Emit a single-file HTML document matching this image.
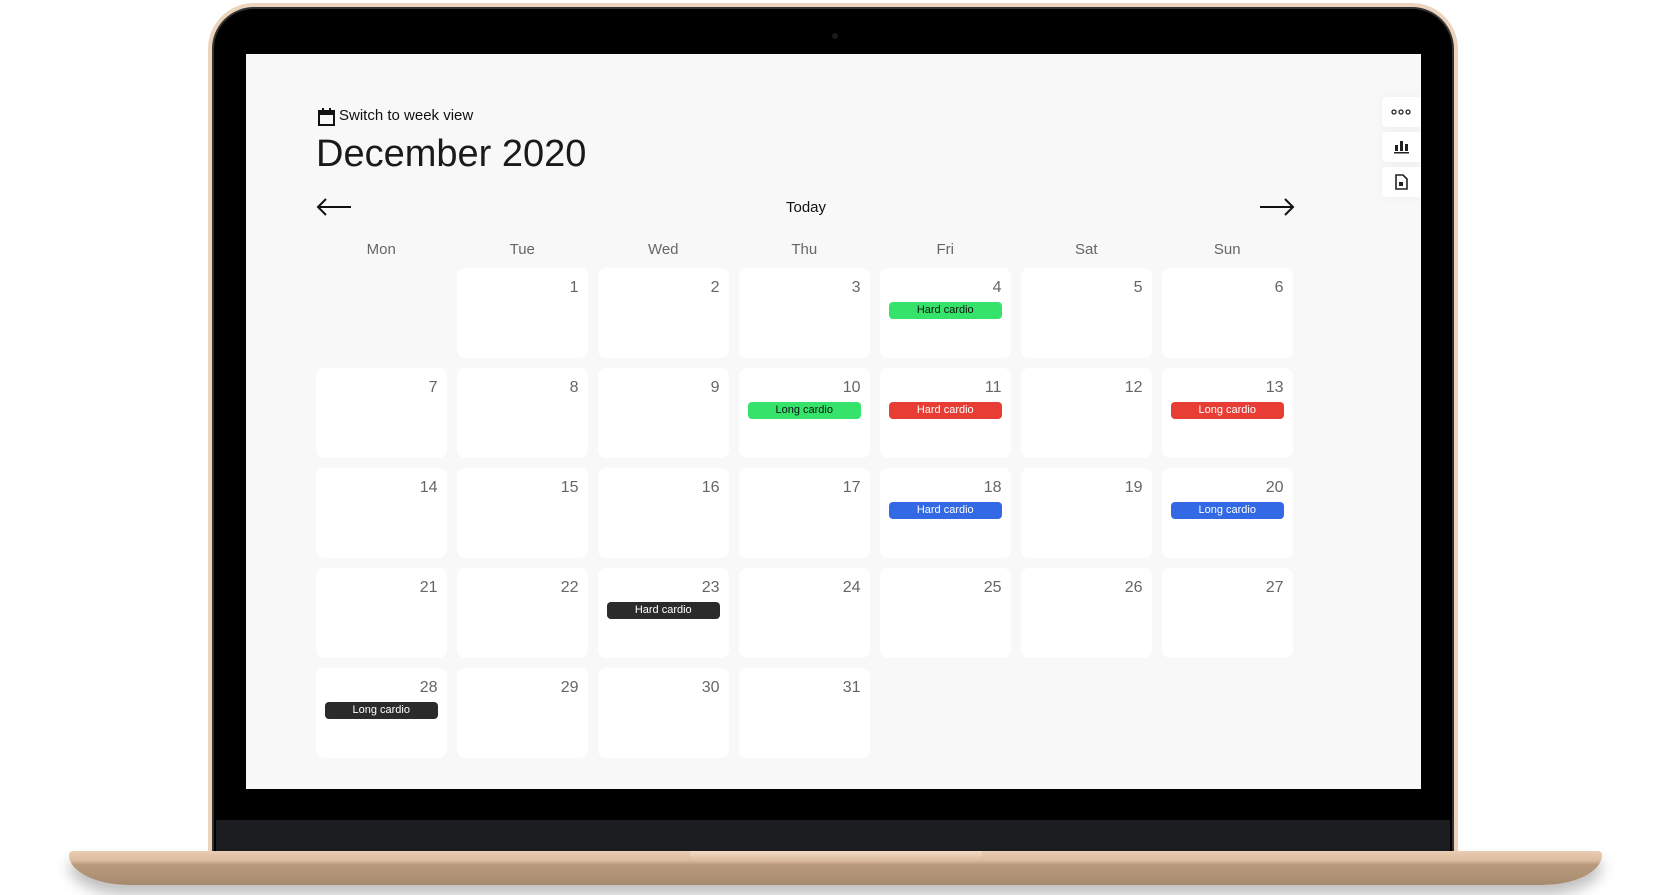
<!DOCTYPE html>
<html><head><meta charset="utf-8"><style>
*{margin:0;padding:0;box-sizing:border-box}
body{width:1666px;height:895px;background:#fff;position:relative;overflow:hidden;font-family:"Liberation Sans",Arial,sans-serif}
.gold{position:absolute;left:208px;top:3px;width:1250px;height:860px;border-radius:46px 46px 0 0;background:#ecd3bd}
.bez{position:absolute;left:212px;top:7px;width:1242px;height:850px;border-radius:42px 42px 0 0;background:#000;border:2px solid #333}
.band{position:absolute;left:216px;top:820px;width:1234px;height:32px;background:#1c1d20}
.screen{position:absolute;left:246px;top:54px;width:1175px;height:735px;background:#f8f8f8}
.base{position:absolute;left:69px;top:851px;width:1533px;height:34px;border-radius:4px 4px 60px 60px/4px 4px 30px 30px;background:linear-gradient(#e9cdb4 0,#dcbb9d 28%,#b99a7c 40%,#a78a6e 100%);box-shadow:0 10px 14px rgba(0,0,0,.25)}
.notch{position:absolute;left:690px;top:851px;width:292px;height:11px;border-radius:0 0 8px 8px;background:linear-gradient(#f3dcc6,#d6b494)}
.cam{position:absolute;left:832px;top:33px;width:6px;height:6px;border-radius:50%;background:#1a1a1a}
.abs{position:absolute}
.sw{left:339px;top:107px;font-size:15px;color:#111}
.title{left:316px;top:133px;font-size:38px;color:#1a1a1a}
.today{left:776px;top:199px;font-size:15px;color:#111;width:60px;text-align:center}
.wd{top:241px;font-size:15px;color:#666;width:130.5px;text-align:center}
.cell{position:absolute;width:130.5px;height:90px;background:#fff;border-radius:8px}
.n{position:absolute;right:9px;top:11px;font-size:16px;color:#666}
.ev{position:absolute;left:9px;right:9px;top:34px;height:17px;border-radius:4px;font-size:11px;text-align:center;line-height:17px;color:#fff}
.g{background:#35e36a;color:#111}.r{background:#e83d35}.b{background:#3369e5}.k{background:#2b2b2b}
.sb{position:absolute;left:1382px;width:39px;height:30px;background:#fff;border-radius:4px 0 0 4px;box-shadow:0 0 12px rgba(0,0,0,.04)}
</style></head><body>
<div class="gold"></div><div class="bez"></div><div class="band"></div>
<div class="cam"></div>
<div class="screen"></div>
<div class="base"></div><div class="notch"></div>

<svg class="abs" style="left:318px;top:108px" width="17" height="18" viewBox="0 0 17 18"><rect x="1" y="3" width="15" height="14" fill="none" stroke="#111" stroke-width="2"/><rect x="1" y="3" width="15" height="4" fill="#111"/><rect x="4" y="0" width="2" height="4" fill="#111"/><rect x="11" y="0" width="2" height="4" fill="#111"/></svg>
<div class="abs sw">Switch to week view</div>
<div class="abs title">December 2020</div>
<svg class="abs" style="left:316px;top:198px" width="36" height="18" viewBox="0 0 36 18"><path d="M35 9H2M10 1L2 9l8 8" fill="none" stroke="#111" stroke-width="2"/></svg>
<svg class="abs" style="left:1259px;top:198px" width="36" height="18" viewBox="0 0 36 18"><path d="M1 9h33M26 1l8 8-8 8" fill="none" stroke="#111" stroke-width="2"/></svg>
<div class="abs today">Today</div>

<div class="sb" style="top:97px"><svg style="position:absolute;left:9px;top:11px" width="20" height="8"><circle cx="3" cy="4" r="2" fill="none" stroke="#222" stroke-width="1.3"/><circle cx="10" cy="4" r="2" fill="none" stroke="#222" stroke-width="1.3"/><circle cx="17" cy="4" r="2" fill="none" stroke="#222" stroke-width="1.3"/></svg></div>
<div class="sb" style="top:132px"><svg style="position:absolute;left:12px;top:8px" width="15" height="14"><rect x="1" y="5" width="3" height="6" fill="#222"/><rect x="6" y="1" width="3" height="10" fill="#222"/><rect x="11" y="4" width="3" height="7" fill="#222"/><rect x="0" y="12" width="15" height="1.5" fill="#222"/></svg></div>
<div class="sb" style="top:167px"><svg style="position:absolute;left:13px;top:7px" width="13" height="16"><path d="M1 1h7l4 4v10H1z" fill="none" stroke="#222" stroke-width="1.6"/><rect x="4" y="8" width="4" height="4" fill="#222"/></svg></div>

<div class="abs wd" style="left:316px">Mon</div>
<div class="abs wd" style="left:457px">Tue</div>
<div class="abs wd" style="left:598px">Wed</div>
<div class="abs wd" style="left:739px">Thu</div>
<div class="abs wd" style="left:880px">Fri</div>
<div class="abs wd" style="left:1021px">Sat</div>
<div class="abs wd" style="left:1162px">Sun</div>

<div class="cell" style="left:457px;top:268px"><div class="n">1</div></div>
<div class="cell" style="left:598px;top:268px"><div class="n">2</div></div>
<div class="cell" style="left:739px;top:268px"><div class="n">3</div></div>
<div class="cell" style="left:880px;top:268px"><div class="n">4</div><div class="ev g">Hard cardio</div></div>
<div class="cell" style="left:1021px;top:268px"><div class="n">5</div></div>
<div class="cell" style="left:1162px;top:268px"><div class="n">6</div></div>

<div class="cell" style="left:316px;top:368px"><div class="n">7</div></div>
<div class="cell" style="left:457px;top:368px"><div class="n">8</div></div>
<div class="cell" style="left:598px;top:368px"><div class="n">9</div></div>
<div class="cell" style="left:739px;top:368px"><div class="n">10</div><div class="ev g">Long cardio</div></div>
<div class="cell" style="left:880px;top:368px"><div class="n">11</div><div class="ev r">Hard cardio</div></div>
<div class="cell" style="left:1021px;top:368px"><div class="n">12</div></div>
<div class="cell" style="left:1162px;top:368px"><div class="n">13</div><div class="ev r">Long cardio</div></div>

<div class="cell" style="left:316px;top:468px"><div class="n">14</div></div>
<div class="cell" style="left:457px;top:468px"><div class="n">15</div></div>
<div class="cell" style="left:598px;top:468px"><div class="n">16</div></div>
<div class="cell" style="left:739px;top:468px"><div class="n">17</div></div>
<div class="cell" style="left:880px;top:468px"><div class="n">18</div><div class="ev b">Hard cardio</div></div>
<div class="cell" style="left:1021px;top:468px"><div class="n">19</div></div>
<div class="cell" style="left:1162px;top:468px"><div class="n">20</div><div class="ev b">Long cardio</div></div>

<div class="cell" style="left:316px;top:568px"><div class="n">21</div></div>
<div class="cell" style="left:457px;top:568px"><div class="n">22</div></div>
<div class="cell" style="left:598px;top:568px"><div class="n">23</div><div class="ev k">Hard cardio</div></div>
<div class="cell" style="left:739px;top:568px"><div class="n">24</div></div>
<div class="cell" style="left:880px;top:568px"><div class="n">25</div></div>
<div class="cell" style="left:1021px;top:568px"><div class="n">26</div></div>
<div class="cell" style="left:1162px;top:568px"><div class="n">27</div></div>

<div class="cell" style="left:316px;top:668px"><div class="n">28</div><div class="ev k">Long cardio</div></div>
<div class="cell" style="left:457px;top:668px"><div class="n">29</div></div>
<div class="cell" style="left:598px;top:668px"><div class="n">30</div></div>
<div class="cell" style="left:739px;top:668px"><div class="n">31</div></div>
</body></html>
